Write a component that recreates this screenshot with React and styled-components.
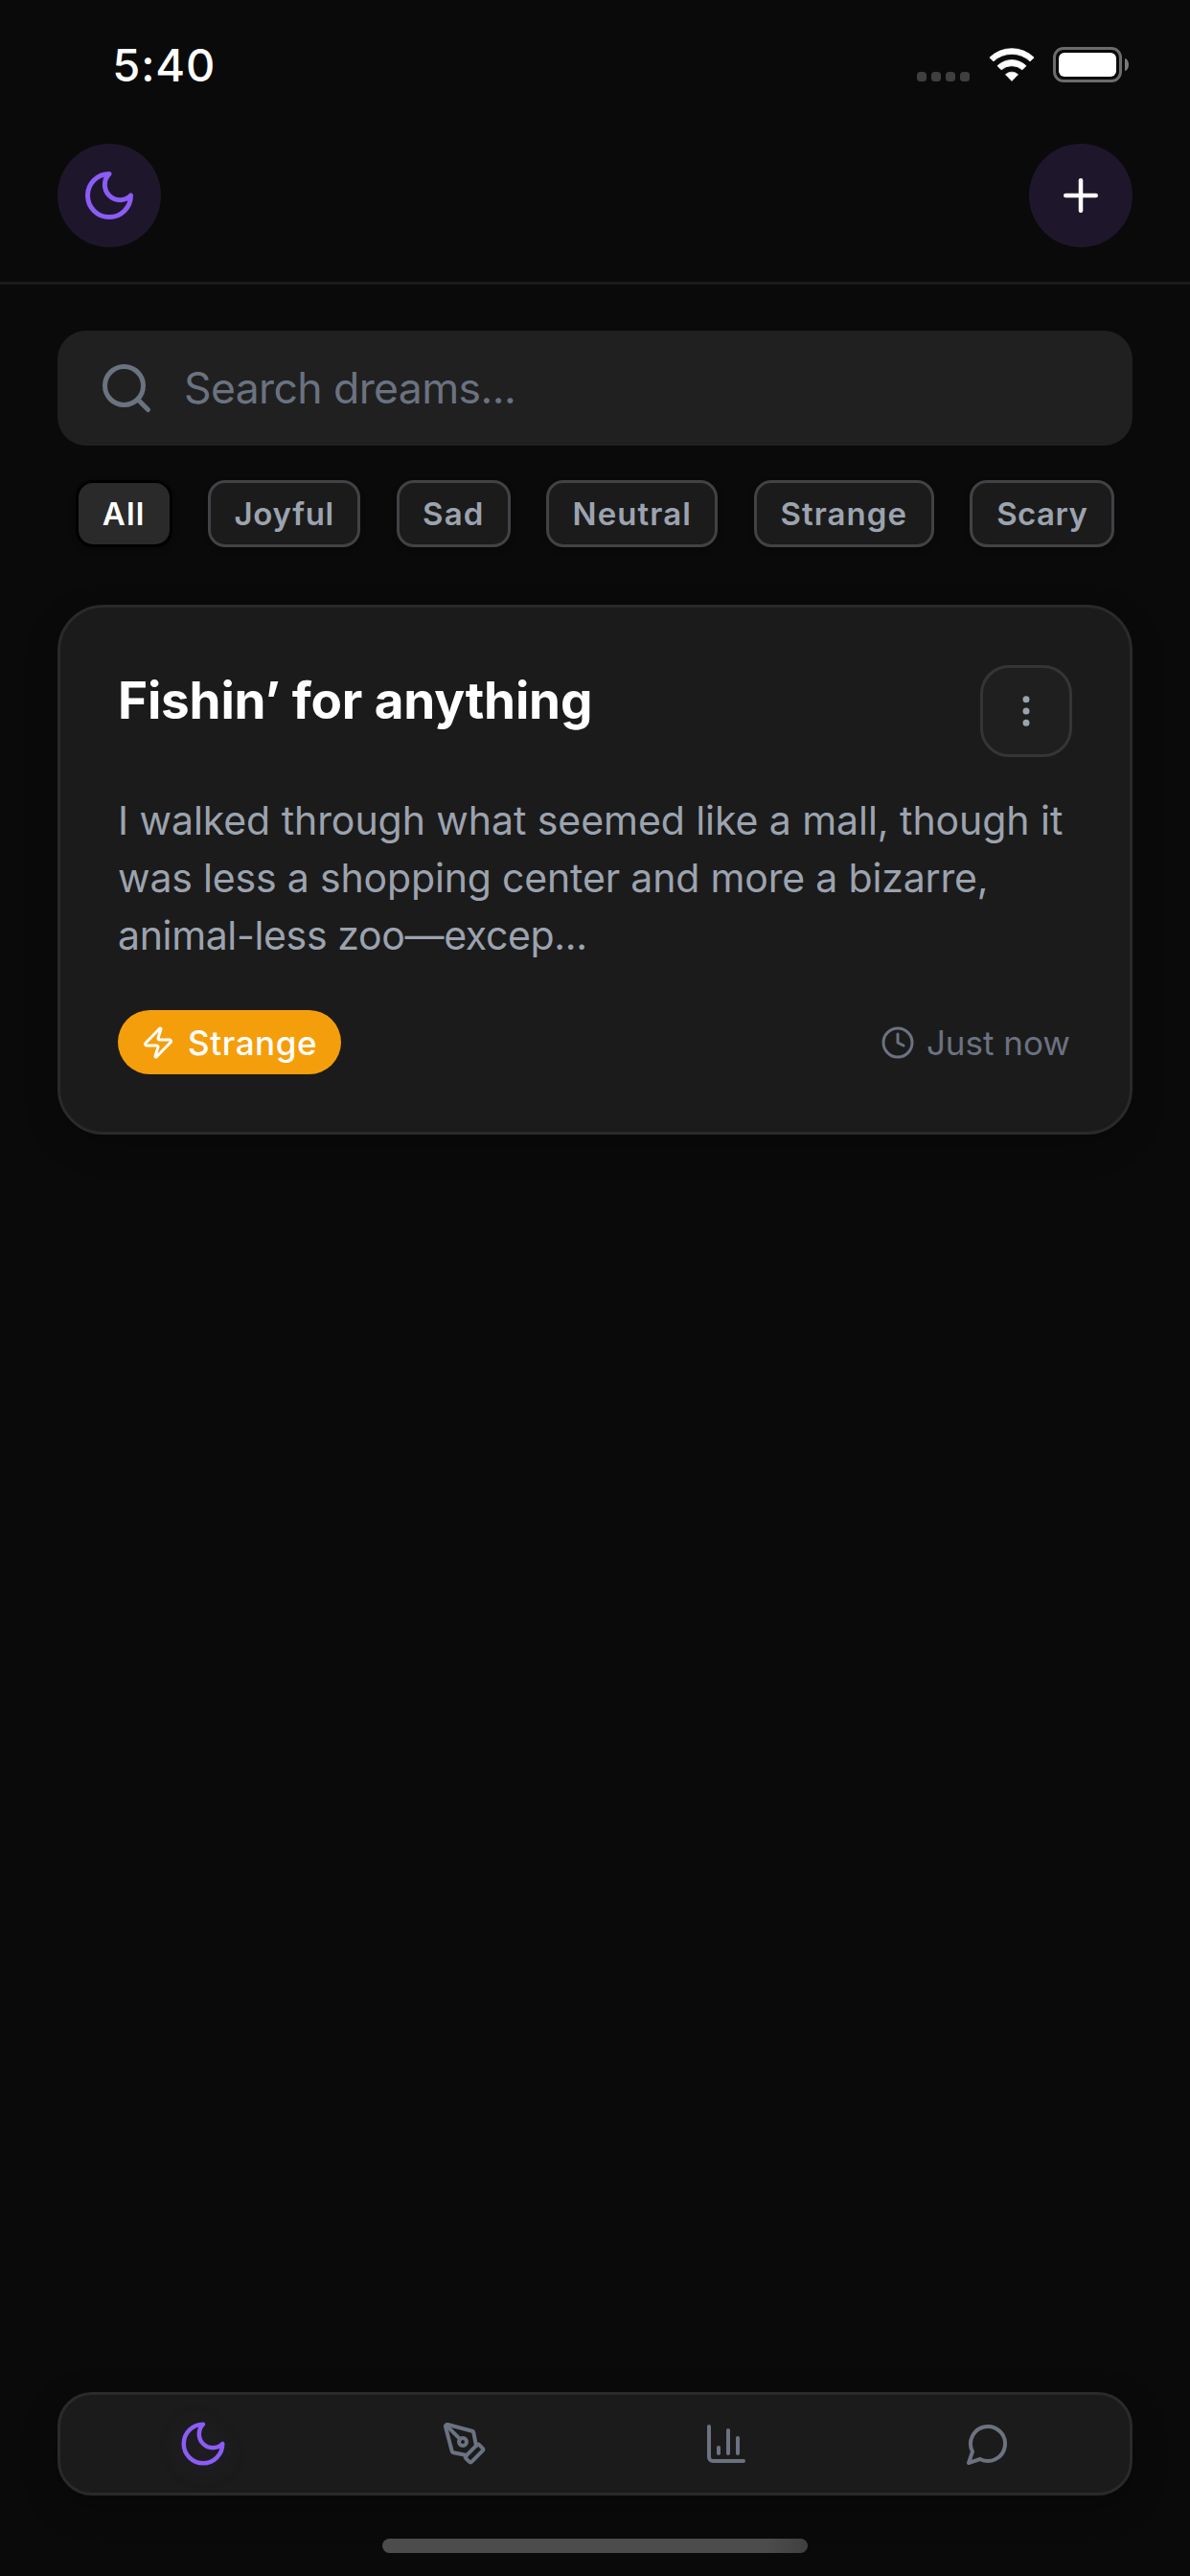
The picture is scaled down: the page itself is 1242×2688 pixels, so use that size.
import React from "react";
import styled, { createGlobalStyle } from "styled-components";

const Global = createGlobalStyle`
  *, *::before, *::after { box-sizing: border-box; }
  body { margin: 0; background: #0a0a0a; }
  button { margin: 0; padding: 0; border: 0; background: none; font: inherit; color: inherit; }
  svg { display: block; flex: none; }
`;

const Screen = styled.div`
  width: 1242px;
  height: 2688px;
  display: flex;
  flex-direction: column;
  overflow: hidden;
  background: #0a0a0a;
  color: #fff;
  font-family: "Inter", "Liberation Sans", sans-serif;
`;

/* Status bar */
const StatusBar = styled.div`
  height: 132px;
  flex: none;
  display: flex;
  justify-content: space-between;
  padding: 0 64px 0 117.3px;
`;
const Time = styled.div`
  padding-top: 37.5px;
  font-size: 47px;
  font-weight: 550;
  line-height: 60px;
  letter-spacing: 0.85px;
`;
const StatusIcons = styled.div`
  height: 37px;
  margin-top: 49px;
  display: flex;
  align-items: flex-start;
`;
const SignalDots = styled.div`
  display: flex;
  gap: 5px;
  padding-top: 26px;
  margin-right: 19.5px;
`;
const SignalDot = styled.span`
  width: 10px;
  height: 10px;
  border-radius: 3.5px;
  background: #3f3f3f;
`;
const Battery = styled.div`
  display: flex;
  align-items: center;
  margin-left: 19.5px;
`;
const BatteryCase = styled.div`
  width: 72px;
  height: 37px;
  padding: 3px;
  border: 3px solid #6c6c6c;
  border-radius: 11px;
`;
const BatteryLevel = styled.div`
  height: 25px;
  border-radius: 6px;
  background: #fff;
`;
const BatteryCap = styled.div`
  width: 4px;
  height: 13px;
  margin-left: 3px;
  border-radius: 0 4px 4px 0 / 0 6.5px 6.5px 0;
  background: #7a7a7a;
`;

/* Header */
const Header = styled.header`
  height: 165px;
  flex: none;
  display: flex;
  justify-content: space-between;
  padding: 18px 60px 0;
  border-bottom: 3px solid #1b1b1b;
`;
const RoundButton = styled.button`
  width: 108px;
  height: 108px;
  display: flex;
  align-items: center;
  justify-content: center;
  border-radius: 50%;
  background: #1e172b;
  color: ${(p) => p.$color};
`;

const Content = styled.main`
  flex: 1;
  display: flex;
  flex-direction: column;
  padding: 48px 60px 0;
`;
const SearchBox = styled.div`
  height: 120px;
  display: flex;
  align-items: center;
  gap: 30px;
  padding: 0 42px;
  border-radius: 30px;
  background: #202020;
  color: #6b7280;
  font-size: 44.5px;
  letter-spacing: -0.6px;
`;

const Filters = styled.div`
  display: flex;
  justify-content: space-around;
  margin-top: 36px;
`;
const Chip = styled.button`
  width: ${(p) => p.$width}px;
  height: 70px;
  display: flex;
  align-items: center;
  justify-content: center;
  border: 3px solid ${(p) => (p.$active ? "#000" : "#424246")};
  border-radius: 18px;
  background: ${(p) => (p.$active ? "#2a2a2a" : "#1b1b1b")};
  box-shadow: 0 3px 6px rgba(0, 0, 0, 0.2);
  color: ${(p) => (p.$active ? "#fff" : "#9ca3af")};
  font-size: 33px;
  font-weight: 600;
  letter-spacing: ${(p) => p.$tracking}px;
`;

/* Dream card */
const Card = styled.article`
  margin-top: 60px;
  padding: 60px;
  border: 3px solid #2a2a2a;
  border-radius: 48px;
  background: #1b1b1b;
  box-shadow: 0 12px 36px rgba(0, 0, 0, 0.2);
`;
const CardTop = styled.div`
  display: flex;
  justify-content: space-between;
`;
const CardTitle = styled.h2`
  margin: 0;
  font-size: 53px;
  font-weight: 700;
  line-height: 74px;
  letter-spacing: -0.18px;
`;
const MenuButton = styled.button`
  width: 96px;
  height: 96px;
  display: flex;
  align-items: center;
  justify-content: center;
  border: 3px solid #353535;
  border-radius: 30px;
  background: #1f1f1f;
  color: #9ca3af;
`;
const Excerpt = styled.p`
  margin: 36px 0 48px;
  color: #9ca3af;
  font-size: 41px;
  line-height: 60px;
`;
const ExcerptLine = styled.span`
  display: block;
  white-space: nowrap;
  letter-spacing: ${(p) => p.$tracking}px;
`;
const CardFooter = styled.div`
  display: flex;
  align-items: center;
  justify-content: space-between;
`;
const MoodBadge = styled.div`
  width: 233px;
  height: 67px;
  display: flex;
  align-items: center;
  gap: 13px;
  padding-left: 24px;
  border-radius: 34px;
  background: #f59e0b;
  font-size: 35px;
  font-weight: 500;
  letter-spacing: 0.58px;
`;
const Timestamp = styled.div`
  display: flex;
  align-items: center;
  gap: 12px;
  padding-right: 2px;
  color: #6b7280;
  font-size: 35px;
`;

/* Bottom navigation */
const TabBar = styled.nav`
  height: 108px;
  flex: none;
  display: flex;
  margin: 0 60px;
  padding: 0 12px;
  border: 3px solid #2a2a2a;
  border-radius: 36px;
  background: #1b1b1b;
  box-shadow: 0 12px 36px rgba(0, 0, 0, 0.25);
`;
const Tab = styled.button`
  flex: 1;
  display: flex;
  align-items: center;
  justify-content: center;
  color: ${(p) => (p.$active ? "#8b5cf6" : "#6b7280")};
  svg { filter: ${(p) => (p.$active ? "drop-shadow(0 3px 15px rgba(139, 92, 246, 0.12))" : "none")}; }
`;
const HomeIndicator = styled.div`
  width: 444px;
  height: 15px;
  flex: none;
  margin: 45px auto 24px;
  border-radius: 7.5px;
  background: linear-gradient(to right, #4c4c4c 90%, #404040);
`;

const Icon = ({ size, children }) => (
  <svg width={size} height={size} viewBox="0 0 24 24" fill="none" stroke="currentColor"
    strokeWidth="2" strokeLinecap="round" strokeLinejoin="round">{children}</svg>
);
const MoonIcon = ({ size }) => (
  <Icon size={size}><path d="M12 3a6 6 0 0 0 9 9 9 9 0 1 1-9-9Z" /></Icon>
);
const WifiIcon = () => (
  <svg width="48" height="37" viewBox="0 0 48 37" fill="#fff" stroke="#fff" strokeWidth="0.8" strokeLinejoin="round">
    <path d="M0.9 11.1A33 33 0 0 1 47.1 11.1L43.1 14.9A28 28 0 0 0 4.9 14.9Z" />
    <path d="M9 19.7A21.5 21.5 0 0 1 39 19.7L34.9 23.8A16.5 16.5 0 0 0 13.1 23.8Z" />
    <path d="M17.5 28.7A9.5 9.5 0 0 1 30.5 28.7L24 35.4Z" />
  </svg>
);

const filters = [
  { label: "All", width: 101, tracking: 1.2, active: true },
  { label: "Joyful", width: 159, tracking: 0.7 },
  { label: "Sad", width: 119, tracking: 1.1 },
  { label: "Neutral", width: 179, tracking: 1.1 },
  { label: "Strange", width: 188, tracking: 1.05 },
  { label: "Scary", width: 151, tracking: 0.45 },
];
const excerpt = [
  { text: "I walked through what seemed like a mall, though it", tracking: -0.06 },
  { text: "was less a shopping center and more a bizarre,", tracking: -0.17 },
  { text: "animal-less zoo—excep...", tracking: -0.35 },
];

export default function App() {
  return (
    <Screen>
      <Global />
      <StatusBar>
        <Time>5:40</Time>
        <StatusIcons>
          <SignalDots>
            <SignalDot /><SignalDot /><SignalDot /><SignalDot />
          </SignalDots>
          <WifiIcon />
          <Battery>
            <BatteryCase><BatteryLevel /></BatteryCase>
            <BatteryCap />
          </Battery>
        </StatusIcons>
      </StatusBar>

      <Header>
        <RoundButton $color="#8b5cf6"><MoonIcon size={60} /></RoundButton>
        <RoundButton $color="#fff">
          <Icon size={54}><path d="M5 12h14" /><path d="M12 5v14" /></Icon>
        </RoundButton>
      </Header>

      <Content>
        <SearchBox>
          <Icon size={60}><circle cx="11" cy="11" r="8" /><path d="m21 21-4.3-4.3" /></Icon>
          <span>Search dreams...</span>
        </SearchBox>

        <Filters>
          {filters.map((f) => (
            <Chip key={f.label} $width={f.width} $tracking={f.tracking} $active={f.active}>{f.label}</Chip>
          ))}
        </Filters>

        <Card>
          <CardTop>
            <CardTitle>Fishin’ for anything</CardTitle>
            <MenuButton>
              <Icon size={42}>
                <circle cx="12" cy="12" r="1" /><circle cx="12" cy="5" r="1" /><circle cx="12" cy="19" r="1" />
              </Icon>
            </MenuButton>
          </CardTop>
          <Excerpt>
            {excerpt.map((l) => (
              <ExcerptLine key={l.text} $tracking={l.tracking}>{l.text}</ExcerptLine>
            ))}
          </Excerpt>
          <CardFooter>
            <MoodBadge>
              <Icon size={36}>
                <path d="M4 14a1 1 0 0 1-.78-1.63l9.9-10.2a.5.5 0 0 1 .86.46l-1.92 6.02A1 1 0 0 0 13 10h7a1 1 0 0 1 .78 1.63l-9.9 10.2a.5.5 0 0 1-.86-.46l1.92-6.02A1 1 0 0 0 11 14z" />
              </Icon>
              <span>Strange</span>
            </MoodBadge>
            <Timestamp>
              <Icon size={36}><circle cx="12" cy="12" r="10" /><path d="M12 6v6l4 2" /></Icon>
              <span>Just now</span>
            </Timestamp>
          </CardFooter>
        </Card>
      </Content>

      <TabBar>
        <Tab $active><MoonIcon size={54} /></Tab>
        <Tab>
          <Icon size={48}>
            <path d="M15.707 21.293a1 1 0 0 1-1.414 0l-1.586-1.586a1 1 0 0 1 0-1.414l5.586-5.586a1 1 0 0 1 1.414 0l1.586 1.586a1 1 0 0 1 0 1.414z" />
            <path d="m18 13-1.375-6.874a1 1 0 0 0-.746-.776L3.235 2.028a1 1 0 0 0-1.207 1.207L5.35 15.879a1 1 0 0 0 .776.746L13 18" />
            <path d="m2.3 2.3 7.286 7.286" />
            <circle cx="11" cy="11" r="2" />
          </Icon>
        </Tab>
        <Tab>
          <Icon size={48}>
            <path d="M3 3v16a2 2 0 0 0 2 2h16" /><path d="M18 17V9" /><path d="M13 17V5" /><path d="M8 17v-3" />
          </Icon>
        </Tab>
        <Tab>
          <Icon size={48}><path d="M7.9 20A9 9 0 1 0 4 16.1L2 22Z" /></Icon>
        </Tab>
      </TabBar>
      <HomeIndicator />
    </Screen>
  );
}
